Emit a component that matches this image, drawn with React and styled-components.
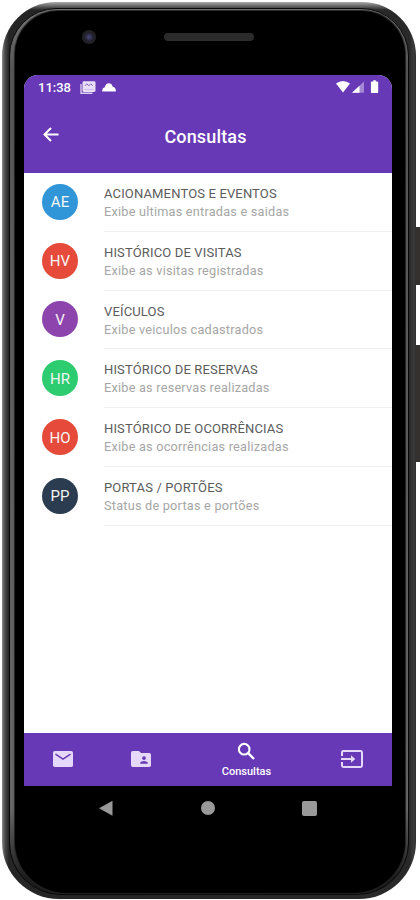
import React from "react";
import styled, { createGlobalStyle } from "styled-components";

const colors = {
  purple: "#6739b6",
  lilac: "#e6d8fa",
  white: "#ffffff",
};

const queries = [
  {
    initials: "AE",
    color: "#3096d8",
    title: "ACIONAMENTOS E EVENTOS",
    text: "Exibe ultimas entradas e saidas",
  },
  {
    initials: "HV",
    color: "#e64a3b",
    title: "HISTÓRICO DE VISITAS",
    text: "Exibe as visitas registradas",
  },
  {
    initials: "V",
    color: "#8d44ad",
    title: "VEÍCULOS",
    text: "Exibe veiculos cadastrados",
  },
  {
    initials: "HR",
    color: "#2dcc70",
    title: "HISTÓRICO DE RESERVAS",
    text: "Exibe as reservas realizadas",
  },
  {
    initials: "HO",
    color: "#e64a3b",
    title: "HISTÓRICO DE OCORRÊNCIAS",
    text: "Exibe as ocorrências realizadas",
  },
  {
    initials: "PP",
    color: "#2b3b50",
    title: "PORTAS / PORTÕES",
    text: "Status de portas e portões",
  },
];

const BackArrow = () => (
  <svg width="21" height="21" viewBox="0 0 21 21" fill="none" stroke={colors.white} strokeWidth="2">
    <path d="M18.500 10.500H4.500M11 4L4.500 10.500L11 17" />
  </svg>
);

const Search = () => (
  <svg width="23" height="23" viewBox="0 0 23 23" fill="none" stroke={colors.white}>
    <circle cx="9.200" cy="9.200" r="5.300" strokeWidth="2.100" />
    <path d="M13.200 13.200L19 19" strokeWidth="2.400" />
  </svg>
);

const Mail = () => (
  <svg width="20" height="16" viewBox="0 0 20 16">
    <rect width="20" height="16" rx="1.8" fill={colors.lilac} />
    <path
      d="M2.5 3.2L10 8.2L17.5 3.2"
      fill="none"
      stroke={colors.purple}
      strokeWidth="1.4"
    />
  </svg>
);

const FolderUser = () => (
  <svg width="20" height="16" viewBox="0 0 20 16" fill={colors.lilac}>
    <path
      fillRule="evenodd"
      d="M18.2 2H10L8 0H1.8Q0 0 0 1.8V14.2Q0 16 1.8 16H18.2Q20 16 20 14.2V3.8Q20 2 18.2 2ZM13 5.2a1.9 1.9 0 1 1 0 3.8a1.9 1.9 0 1 1 0-3.8ZM16.8 12.8H9.2V12C9.2 10.7 11.7 10 13 10S16.8 10.7 16.8 12Z"
    />
  </svg>
);

const Exit = () => (
  <svg
    width="22"
    height="18"
    viewBox="0 0 22 18"
    fill="none"
    stroke={colors.lilac}
    strokeWidth="2"
  >
    <path d="M1 6V2.4Q1 1 2.4 1H19.6Q21 1 21 2.4V15.6Q21 17 19.6 17H2.4Q1 17 1 15.6V12" />
    <path d="M0 9H11" />
    <path d="M10 5.2L14.3 9L10 12.8Z" fill={colors.lilac} stroke="none" />
  </svg>
);

const Gallery = () => (
  <svg width="16" height="13" viewBox="0 0 16 13" fill="none">
    <path d="M1 3v9.2h11.5" stroke={colors.white} strokeWidth="1.4" opacity=".75" />
    <rect x="2.5" y="0.3" width="13" height="10.7" rx="1.4" fill="#e9dff8" />
    <path d="M5 4.8l1.8-2l2 2l2-2l2 2" stroke={colors.purple} opacity=".75" />
    <path d="M4.5 8.5h9" stroke={colors.purple} opacity=".2" />
  </svg>
);

const Cloud = () => (
  <svg width="14" height="9" viewBox="0 0 14 9" fill={colors.white}>
    <path d="M.2 8.5V7.3Q.4 4.6 2.8 4.2Q3.8 .3 6.7 .3Q9.7 .3 10.5 3.6Q13.5 4.2 13.8 7.3V8.5Z" />
  </svg>
);

const SystemIcons = () => (
  <svg width="43" height="14" viewBox="0 0 43 14" fill={colors.white}>
    <path d="M0 3.5Q7-1.5 14 3.5L7 12.5Z" />
    <path d="M16 12.7L28 1.5V12.7Z" opacity=".4" />
    <path d="M16 12.7L23.5 5.7V12.7Z" />
    <path d="M37.3 .3h2.5v1.2h1.6q.8 0 .8.8v10q0 .8-.8.8h-5.7q-.8 0-.8-.8v-10q0-.8.8-.8h1.6Z" />
  </svg>
);

const App = () => {
  return (
    <>
      <GlobalStyle />
      <Stage>
        <SideButton $top={227} $height={58} />
        <SideButton $top={345} $height={117} />
        <Frame>
          <Bezel>
            <Glass>
              <TopBezel>
                <Camera />
                <Speaker />
              </TopBezel>
              <Screen>
                <StatusBar>
                  <Clock>11:38</Clock>
                  <Notifications>
                    <Gallery />
                    <Cloud />
                  </Notifications>
                  <SystemIcons />
                </StatusBar>
                <Header>
                  <BackArrow />
                  <Title>Consultas</Title>
                </Header>
                <List>
                  {queries.map((item) => (
                    <Row key={item.title}>
                      <Avatar $color={item.color}>{item.initials}</Avatar>
                      <RowBody>
                        <RowTitle>{item.title}</RowTitle>
                        <RowText>{item.text}</RowText>
                      </RowBody>
                    </Row>
                  ))}
                </List>
                <TabBar>
                  <Tab>
                    <Mail />
                  </Tab>
                  <Tab>
                    <FolderUser />
                  </Tab>
                  <Tab $active>
                    <Search />
                    <TabLabel>Consultas</TabLabel>
                  </Tab>
                  <Tab>
                    <Exit />
                  </Tab>
                </TabBar>
              </Screen>
              <SystemNav>
                <svg width="15" height="17" viewBox="0 0 15 17">
                  <path d="M1 8.3L14.5 .8v15Z" fill="#999" />
                </svg>
                <HomeDot />
                <RecentSquare />
              </SystemNav>
            </Glass>
          </Bezel>
        </Frame>
      </Stage>
    </>
  );
};

export default App;

const GlobalStyle = createGlobalStyle`
  * {
    box-sizing: border-box;
  }
  body {
    margin: 0;
    background: ${colors.white};
    font-family: Roboto, sans-serif;
  }
  svg {
    display: block;
    flex: none;
  }
`;
const Stage = styled.div`
  position: relative;
  width: 420px;
  height: 900px;
  padding: 2px 4px 1px 2px;
  overflow: hidden;
`;
const SideButton = styled.div`
  position: absolute;
  right: 0;
  top: ${(props) => props.$top}px;
  width: 6px;
  height: ${(props) => props.$height}px;
  background: #35312f;
`;
const Frame = styled.div`
  position: relative;
  height: 897px;
  padding: 6px 7px 4px;
  border-radius: 54px 54px 57px 57px;
  background:
    linear-gradient(180deg, #aaa 0, #777 3px, rgba(60, 60, 60, 0) 8px),
    linear-gradient(90deg, #8a8a8a 0, #4a4a4a 3px, #252525 7px, #292929 408px, #3b3b3b 411px, #303030 414px);
`;
const Bezel = styled.div`
  height: 100%;
  padding: 2px 3px 1px 5px;
  border: 1px solid #080808;
  border-radius: 48px 48px 52px 52px;
  background: linear-gradient(180deg, #777 0, #555 60px, #666 800px, #1c1c1c 870px);
`;
const Glass = styled.div`
  display: flex;
  flex-direction: column;
  height: 100%;
  padding: 0 12px 0 9px;
  border-radius: 43px 43px 51px 51px;
  background: #000;
  box-shadow: 0 0 1px 1px #222;
`;
const TopBezel = styled.div`
  display: flex;
  height: 64px;
  padding: 19px 0 0 58px;
`;
const Camera = styled.div`
  width: 14px;
  height: 14px;
  border-radius: 50%;
  background: radial-gradient(circle, #4b4b7c 0, #26263e 35%, #202024 50%, #242428 70%);
`;
const Speaker = styled.div`
  width: 90px;
  height: 8px;
  margin: 3px 0 0 68px;
  border-radius: 4px;
  background: #2b2b2b;
`;
const Screen = styled.main`
  display: flex;
  flex-direction: column;
  width: 368px;
  height: 711px;
  border-radius: 14px 14px 0 0;
  overflow: hidden;
  background: ${colors.white};
`;
const StatusBar = styled.div`
  display: flex;
  align-items: center;
  height: 24px;
  padding: 0 13px 0 14px;
  background: ${colors.purple};
  color: ${colors.white};
`;
const Clock = styled.span`
  width: 42px;
  font-size: 13px;
  font-weight: 500;
`;
const Notifications = styled.div`
  display: flex;
  flex: 1;
  align-items: center;
  gap: 6px;
`;
const Header = styled.header`
  display: grid;
  grid-template-columns: 42px 1fr 60px;
  align-items: center;
  height: 74px;
  padding: 0 3px 4px 16px;
  background: ${colors.purple};
  color: ${colors.white};
`;
const Title = styled.h1`
  margin: 4px 0 0;
  font-size: 18px;
  font-weight: 500;
  letter-spacing: 0.15px;
  text-align: center;
`;
const List = styled.div`
  flex: 1;
`;
const Row = styled.div`
  display: flex;
  align-items: center;
  height: 58.8px;
  padding-left: 18px;
`;
const Avatar = styled.div`
  display: grid;
  place-items: center;
  width: 36px;
  height: 36px;
  margin-top: -1px;
  padding-top: 1px;
  border-radius: 50%;
  background: ${(props) => props.$color};
  color: #f5f5f5;
  font-size: 15px;
`;
const RowBody = styled.div`
  flex: 1;
  height: 100%;
  margin-left: 26px;
  padding-top: 12px;
  border-bottom: 1px solid #f0f0f0;
  white-space: nowrap;
`;
const RowTitle = styled.div`
  color: #5c5c5c;
  font-size: 13px;
  line-height: 18px;
  letter-spacing: 0.15px;
`;
const RowText = styled.div`
  color: #a6a6a6;
  font-size: 12.7px;
  line-height: 18px;
  letter-spacing: 0.23px;
`;
const TabBar = styled.nav`
  display: grid;
  grid-template-columns: 78px 78px 133px 78px;
  height: 53px;
  padding-bottom: 2px;
  background: ${colors.purple};
`;
const Tab = styled.div`
  display: flex;
  flex-direction: column;
  align-items: center;
  justify-content: center;
  gap: 2px;
  color: ${(props) => (props.$active ? colors.white : colors.lilac)};
`;
const TabLabel = styled.span`
  font-size: 11px;
  font-weight: 500;
  line-height: 13px;
`;
const SystemNav = styled.div`
  display: flex;
  align-items: center;
  justify-content: space-between;
  height: 44px;
  padding: 0 76px 0 74px;
`;
const HomeDot = styled.div`
  width: 14px;
  height: 14px;
  border-radius: 50%;
  background: #999;
`;
const RecentSquare = styled.div`
  width: 15px;
  height: 15px;
  border-radius: 2px;
  background: #999;
`;
